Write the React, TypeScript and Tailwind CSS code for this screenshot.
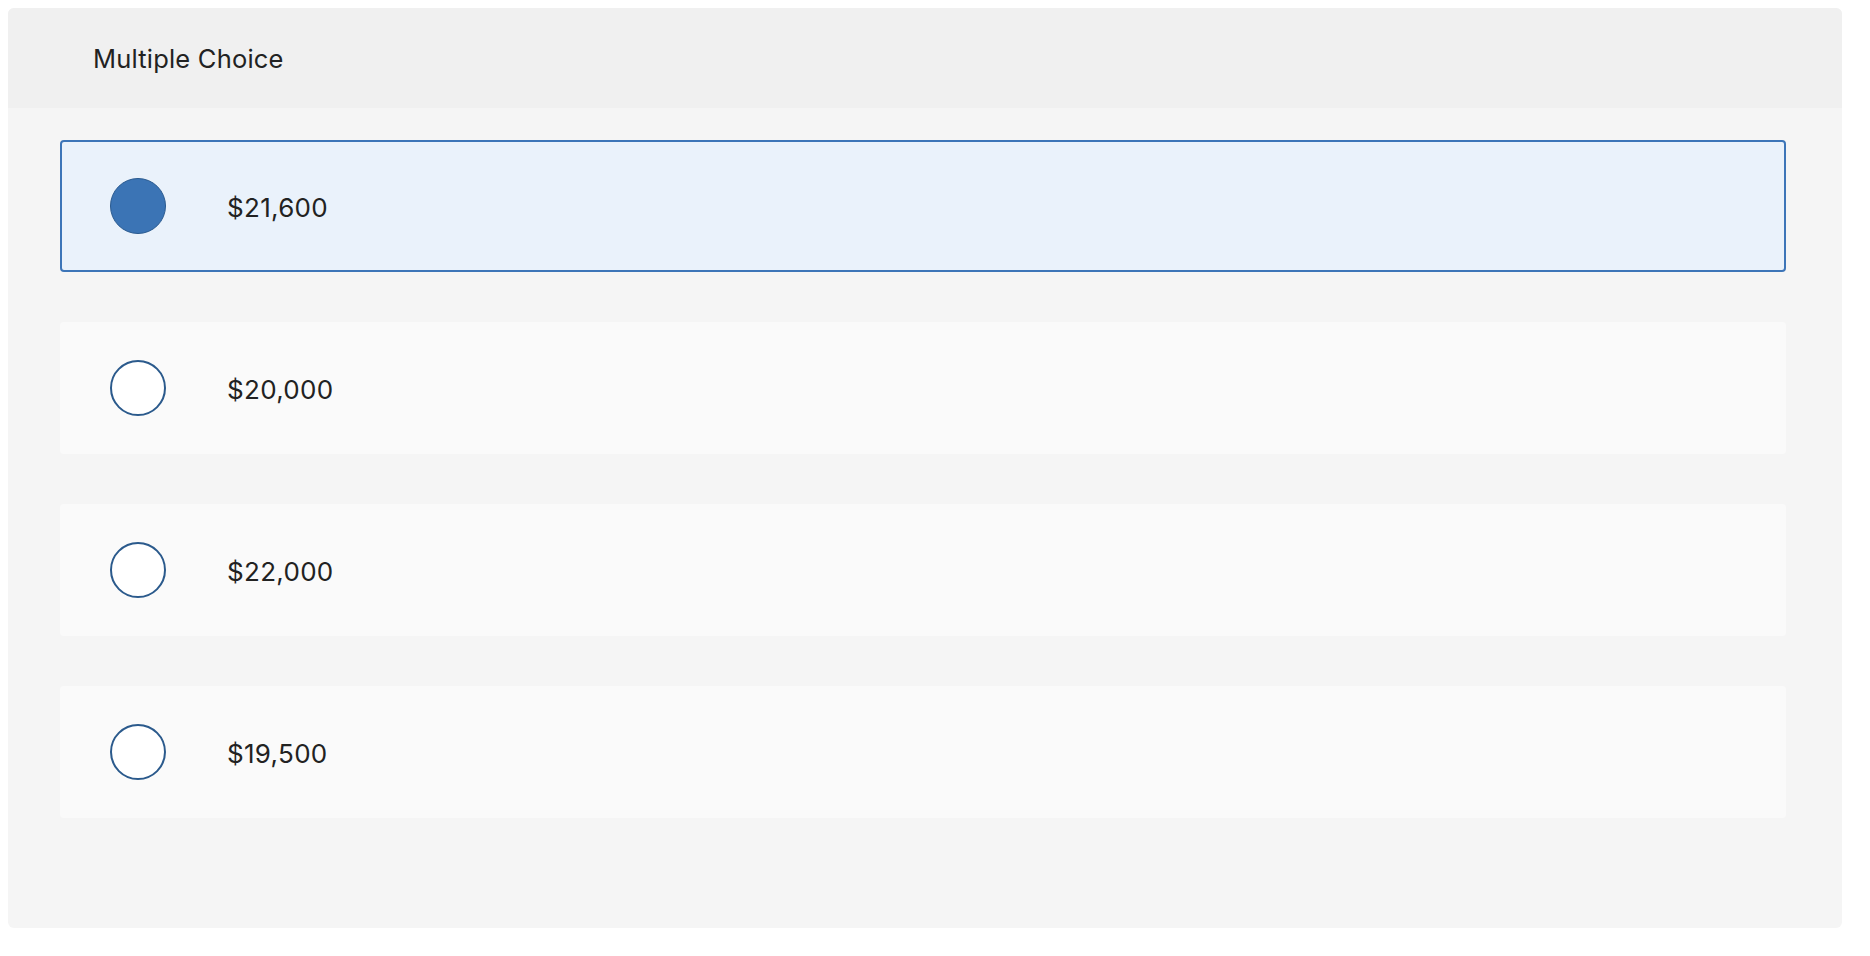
import React from 'react';

const options = [
  { id: 'a', label: '$21,600' },
  { id: 'b', label: '$20,000' },
  { id: 'c', label: '$22,000' },
  { id: 'd', label: '$19,500' },
];

export default function App() {
  const [selected, setSelected] = React.useState('a');

  return (
    <div className="min-h-[956px] w-full bg-white p-2" style={{ fontFamily: 'Inter, Lato, sans-serif' }}>
      <div className="w-[1834px] overflow-hidden rounded-md bg-[#f5f5f5]">
        <div className="flex h-[100px] items-center bg-[#f0f0f0] pl-[85px]">
          <h1 className="pt-[2px] text-[25.5px] tracking-[0.2px] text-[#222]">Multiple Choice</h1>
        </div>
        <div className="flex flex-col gap-[50px] pt-8 pb-[110px] pl-[52px] pr-[56px]">
          {options.map((option) => {
            const active = option.id === selected;
            return (
              <button
                key={option.id}
                type="button"
                onClick={() => setSelected(option.id)}
                className={
                  active
                    ? 'flex h-[132px] items-center rounded border-2 border-[#3d75b8] bg-[#eaf2fb] pl-[48px] text-left'
                    : 'flex h-[132px] items-center rounded border-2 border-transparent bg-[#fafafa] pl-[48px] text-left'
                }
              >
                <span
                  className={
                    active
                      ? 'h-[56px] w-[56px] shrink-0 rounded-full border-[1.5px] border-[#2a5a8f] bg-[#3b74b5]'
                      : 'h-[56px] w-[56px] shrink-0 rounded-full border-2 border-[#2b5a8c] bg-white'
                  }
                />
                <span className="ml-[61px] pt-[2px] text-[26px] tracking-[0.3px] text-[#222]">{option.label}</span>
              </button>
            );
          })}
        </div>
      </div>
    </div>
  );
}
